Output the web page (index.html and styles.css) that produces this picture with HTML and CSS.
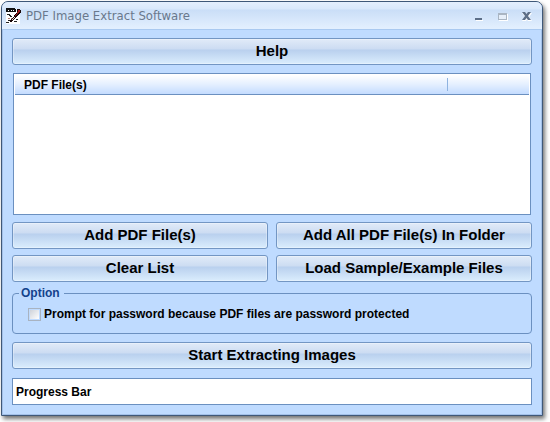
FILE: index.html
```
<!DOCTYPE html>
<html lang="en">
<head>
    <meta charset="UTF-8">
    <meta name="viewport" content="width=device-width, initial-scale=1.0">
    <title>PDF Image Extract Software</title>
    <link rel="stylesheet" href="styles.css">
</head>
<body>
    <div class="window">
        <header class="title-bar">
            <svg class="app-icon" width="16" height="16" viewBox="0 0 16 16" shape-rendering="crispEdges">
                <path d="M0 1h12l2 3v12H0z" fill="#fff"/>
                <path d="M0 0h9v1h1v3H0z" fill="#111"/>
                <path d="M2 2h1v1H2zM5 2h1v1H5zM7 2h1v1H7z" fill="#fff"/>
                <path d="M1 6h3v1H1zM3 7h2v1H3zM4 8h2v1H4zM0 14h3v1H0zM2 12h2v1H2zM10 11h2v1h-2zM8 13h3v1H8z" fill="#222"/>
                <path d="M2 10h2v1H2zM5 10h1v1H5z" fill="#b07a70"/>
                <path d="M11 1h3v1h1v3h-1v1h-1v1h-1v1h-1v1h-1v1H9v1H8v1H7v1H6v1H4v-2h1v-1h1v-1h1V9h1V7h1V6h1V5h1z" fill="#1a0808"/>
                <path d="M12 2h2v2h-1v1h-1v1h-1v1h-1v1H9V7h1V6h1V4h1z" fill="#a51c1c"/>
                <path d="M8 9h1v1H8v1H7v1H6v-1h1v-1h1z" fill="#f4d8d0"/>
            </svg>
            <h1 class="title">PDF Image Extract Software</h1>
            <div class="window-controls">
                <button type="button" aria-label="Minimize">
                    <svg width="10" height="10" viewBox="0 0 10 10" shape-rendering="crispEdges">
                        <path d="M2 9h7v1H2z" fill="#fff"/>
                        <path d="M1 7h7v2H1z" fill="#5d6f88"/>
                    </svg>
                </button>
                <button type="button" aria-label="Maximize" disabled>
                    <svg width="10" height="10" viewBox="0 0 10 10" shape-rendering="crispEdges">
                        <path d="M1 3h9v7H1z" fill="#fff"/>
                        <path d="M0 2h9v7H0z" fill="#a9b5c3"/>
                        <path d="M1 4h7v4H1z" fill="#e6effa"/>
                    </svg>
                </button>
                <button type="button" aria-label="Close">
                    <svg width="10" height="10" viewBox="0 0 10 10">
                        <path d="M0 2h4l1 2 1-2h4L7 6l3 4H6L5 8l-1 2H0l3-4z" fill="#fff"/>
                        <path d="M0 1h3l1.500 2L6 1h3L6 5l3 4H6L4.500 7 3 9H0l3-4z" fill="#5d6f88"/>
                    </svg>
                </button>
            </div>
        </header>

        <main class="content">
            <button type="button" class="btn">Help</button>

            <div class="file-list">
                <table>
                    <thead>
                        <tr>
                            <th class="col-name">PDF File(s)</th>
                            <th class="col-extra"></th>
                        </tr>
                    </thead>
                    <tbody></tbody>
                </table>
            </div>

            <div class="button-grid">
                <button type="button" class="btn">Add PDF File(s)</button>
                <button type="button" class="btn">Add All PDF File(s) In Folder</button>
                <button type="button" class="btn">Clear List</button>
                <button type="button" class="btn">Load Sample/Example Files</button>
            </div>

            <fieldset class="option">
                <legend>Option</legend>
                <input type="checkbox" id="prompt">
                <label for="prompt">Prompt for password because PDF files are password protected</label>
            </fieldset>

            <button type="button" class="btn">Start Extracting Images</button>

            <div class="progress">Progress Bar</div>
        </main>
    </div>
</body>
</html>
```
FILE: styles.css
```
* {
    box-sizing: border-box;
}
body {
    margin: 0;
    padding: 1px 7px 7px 1px;
    background-color: #fff;
    color: #000;
    font: bold 12px/14px "Liberation Sans", Arial, sans-serif;
}
.window {
    border: 1px solid #3f5878;
    border-radius: 7px 7px 0 0;
    background-color: #bfdbff;
    box-shadow: inset 1px 0 #a3c0e8, inset -1px -1px #a3c0e8, 2px 3px 4px rgba(0, 0, 0, 0.55);
}
.title-bar {
    display: flex;
    align-items: center;
    height: 28px;
    padding: 0 10px 0 4px;
    border-bottom: 1px solid #a9c9f0;
    border-radius: 6px 6px 0 0;
    background: linear-gradient(#e4effd 0, #d9e8fb 7px, #cadef7 8px, #e2effe 26px);
}
.title {
    flex: 1;
    margin: 0 0 0 4px;
    color: #69788c;
    font: 13px/16px "DejaVu Sans Condensed", Tahoma, "Noto Sans", sans-serif;
}
.window-controls {
    display: flex;
    gap: 14px;
}
.window-controls button {
    width: 10px;
    height: 10px;
    padding: 0;
    border: none;
    background: none;
}
.window-controls svg {
    display: block;
}
.content {
    display: flex;
    flex-direction: column;
    padding: 8px 10px 10px;
}
.btn {
    height: 27px;
    padding: 0 8px 2px;
    border: 1px solid #7396c3;
    border-radius: 3px;
    background: linear-gradient(#e1ebf8 0, #ccdcf2 10px, #b9d0ee 11px, #d8ebfc 24px);
    box-shadow: inset 0 0 0 1px rgba(255, 255, 255, 0.3);
    color: #000;
    font: bold 15px/18px "Liberation Sans", Arial, sans-serif;
}
.file-list {
    height: 142px;
    margin: 8px 1px 7px;
    padding: 1px;
    border: 1px solid #6b90c0;
    background-color: #fff;
}
.file-list table {
    width: 100%;
    border-collapse: collapse;
}
.file-list th {
    height: 19px;
    padding: 2px 9px 0;
    border-bottom: 1px solid #6b90c0;
    background: linear-gradient(#fff, #e4efff 50%, #c4dcff);
    text-align: left;
}
.file-list .col-extra {
    width: 82px;
    background: linear-gradient(#8fb3e0, #8fb3e0) 0 3px / 1px 13px no-repeat, linear-gradient(#fff, #e4efff 50%, #c4dcff);
}
.button-grid {
    display: grid;
    grid-template-columns: 1fr 1fr;
    gap: 6px 8px;
}
.option {
    display: flex;
    align-items: center;
    min-width: 0;
    margin: 4px 0 8px;
    padding: 7px 15px 12px;
    border: 1px solid #6b90c0;
    border-radius: 4px;
}
.option legend {
    margin-left: -9px;
    padding: 0 4px 0 2px;
    color: #15428b;
}
.option input {
    appearance: none;
    width: 13px;
    height: 13px;
    margin: 0 3px 0 0;
    border: 1px solid #a8b3c2;
    background: linear-gradient(135deg, #cfd3da, #fff) content-box #fff;
    padding: 1px;
}
.progress {
    height: 27px;
    margin-top: 9px;
    padding: 6px 3px;
    border: 1px solid #6b90c0;
    background-color: #fff;
}
```
